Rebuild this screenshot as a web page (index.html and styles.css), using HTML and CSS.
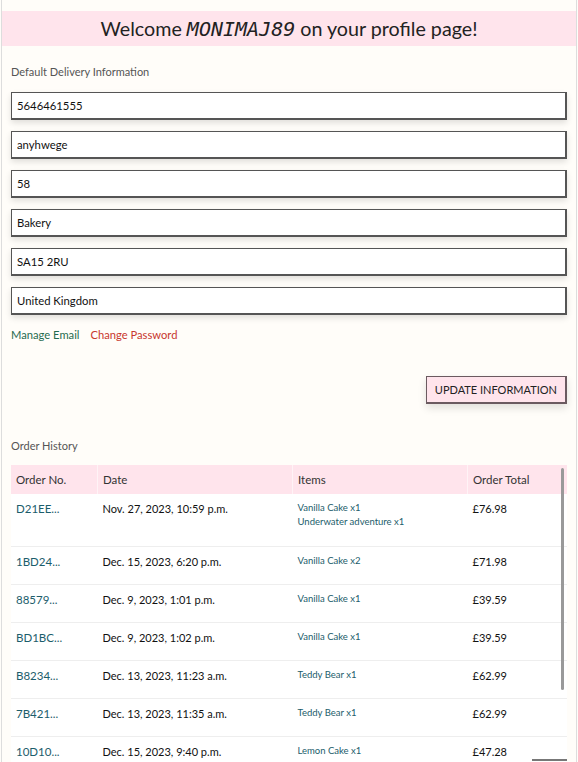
FILE: index.html
```html
<!DOCTYPE html>
<html>
<head>
<meta charset="utf-8">
<link rel="stylesheet" href="styles.css">
</head>
<body>
<div class="page">
  <h1 class="banner">Welcome <span class="user">MONIMAJ89</span> on your profile page!</h1>
  <section class="section">
    <p class="label">Default Delivery Information</p>
    <form class="form">
      <input class="field" type="text" value="5646461555">
      <input class="field" type="text" value="anyhwege">
      <input class="field" type="text" value="58">
      <input class="field" type="text" value="Bakery">
      <input class="field" type="text" value="SA15 2RU">
      <input class="field" type="text" value="United Kingdom">
      <div class="links">
        <a class="link-green" href="#">Manage Email</a>
        <a class="link-red" href="#">Change Password</a>
      </div>
      <div class="actions">
        <button class="btn" type="button">UPDATE INFORMATION</button>
      </div>
    </form>
    <p class="label history-label">Order History</p>
    <div class="table-wrap">
      <table class="orders">
        <thead>
          <tr><th class="c1">Order No.</th><th class="c2">Date</th><th class="c3">Items</th><th class="c4">Order Total</th></tr>
        </thead>
        <tbody>
          <tr><td><a href="#" class="num">D21EE...</a></td><td>Nov. 27, 2023, 10:59 p.m.</td><td class="items">Vanilla Cake x1<br>Underwater adventure x1</td><td>£76.98</td></tr>
          <tr><td><a href="#" class="num">1BD24...</a></td><td>Dec. 15, 2023, 6:20 p.m.</td><td class="items">Vanilla Cake x2</td><td>£71.98</td></tr>
          <tr><td><a href="#" class="num">88579...</a></td><td>Dec. 9, 2023, 1:01 p.m.</td><td class="items">Vanilla Cake x1</td><td>£39.59</td></tr>
          <tr><td><a href="#" class="num">BD1BC...</a></td><td>Dec. 9, 2023, 1:02 p.m.</td><td class="items">Vanilla Cake x1</td><td>£39.59</td></tr>
          <tr><td><a href="#" class="num">B8234...</a></td><td>Dec. 13, 2023, 11:23 a.m.</td><td class="items">Teddy Bear x1</td><td>£62.99</td></tr>
          <tr><td><a href="#" class="num">7B421...</a></td><td>Dec. 13, 2023, 11:35 a.m.</td><td class="items">Teddy Bear x1</td><td>£62.99</td></tr>
          <tr><td><a href="#" class="num">10D10...</a></td><td>Dec. 15, 2023, 9:40 p.m.</td><td class="items">Lemon Cake x1</td><td>£47.28</td></tr>
        </tbody>
      </table>
      <div class="vscroll"></div>
    </div>
  </section>
  <div class="hscroll"></div>
</div>
</body>
</html>
```
FILE: styles.css
```css
html, body {
  margin: 0;
  padding: 0;
  background: #fffdf9;
  height: 762px;
  overflow: hidden;
}
body {
  font-family: Lato, "Noto Sans", sans-serif;
  color: #222;
}
.page {
  margin-left: 1px;
  width: 574px;
  border-left: 1px solid #ddd;
  border-right: 1px solid #ddd;
  padding-top: 11px;
  min-height: 751px;
  position: relative;
}
.banner {
  margin: 0;
  height: 35px;
  background: #ffe4ec;
  font-weight: 400;
  font-size: 19.7px;
  line-height: 35px;
  text-align: center;
  color: #222;
  white-space: nowrap;
}
.user {
  font-family: "DejaVu Sans Mono", monospace;
  font-style: italic;
  font-size: 20px;
}
.section {
  padding: 0 9px;
}
.label {
  margin: 18px 0 0;
  font-size: 11px;
  line-height: 15px;
  color: #555;
}
.form {
  display: flex;
  flex-direction: column;
  margin-top: 13px;
}
.field {
  box-sizing: border-box;
  height: 28px;
  margin: 0 0 11px;
  padding: 0 5px;
  border: 1px solid #555;
  border-bottom-width: 2px;
  border-right-width: 2px;
  background: #fff;
  font-family: Lato, sans-serif;
  font-size: 11.3px;
  color: #111;
  box-shadow: 0 3px 6px rgba(0,0,0,0.12);
  outline: none;
}
.links {
  display: flex;
  gap: 11px;
  margin-top: 1px;
  font-size: 11.2px;
  line-height: 16px;
}
.links a { text-decoration: none; }
.link-green { color: #1f6b4f; }
.link-red { color: #c8382e; }
.actions {
  display: flex;
  justify-content: flex-end;
  margin-top: 33px;
}
.btn {
  height: 28px;
  padding: 0 8px;
  background: #ffe4ec;
  border: 1px solid #6b5a60;
  border-bottom-width: 2px;
  border-right-width: 2px;
  font-family: Lato, sans-serif;
  font-size: 11px;
  color: #222;
  box-shadow: 0 4px 8px rgba(0,0,0,0.12);
}
.history-label {
  margin-top: 34px;
}
.table-wrap {
  margin-top: 12px;
  position: relative;
}
.orders {
  width: 100%;
  border-collapse: collapse;
  font-size: 11px;
}
.orders th {
  background: #ffe4ec;
  font-weight: 400;
  text-align: left;
  height: 29px;
  padding: 0 5px;
  font-size: 11.5px;
  color: #333;
  border-left: 1px solid #fff3f6;
}
.orders th:first-child { border-left: none; }
.c1 { width: 76px; }
.c2 { width: 184px; }
.c3 { width: 164px; }
.orders td {
  vertical-align: top;
  padding: 7px 5px 0;
  height: 30px;
  border-bottom: 1px solid #eee;
  background: #fff;
  color: #111;
  line-height: 15px;
}
.orders tbody tr:first-child td { height: 45px; }
.num {
  color: #1c5d6b;
  text-decoration: none;
  font-size: 11.5px;
}
.orders td.items {
  color: #1c5d6b;
  font-size: 9.5px;
  line-height: 14px;
}
.vscroll {
  position: absolute;
  right: 3px;
  top: 3px;
  width: 3px;
  height: 222px;
  background: #999;
  border-radius: 2px;
}
.hscroll {
  position: absolute;
  right: 9px;
  top: 759px;
  width: 35px;
  height: 2px;
  background: #777;
}
```
